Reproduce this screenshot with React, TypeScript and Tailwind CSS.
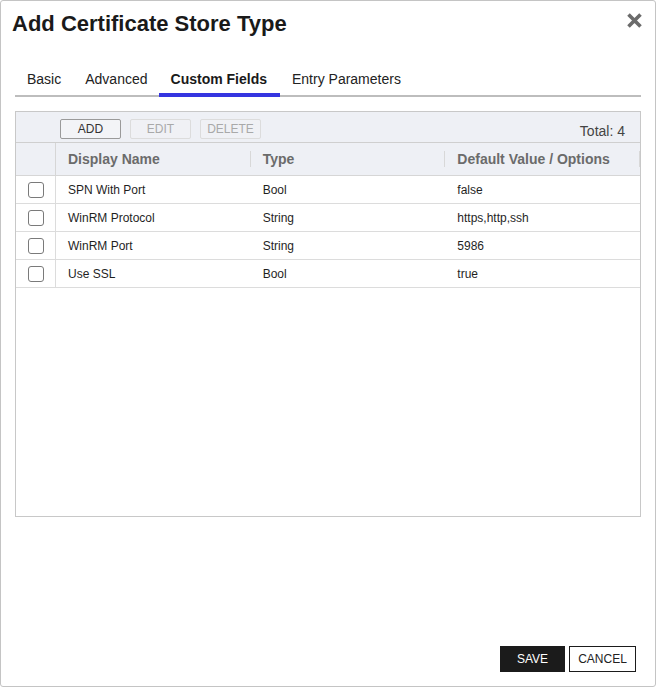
import React from "react";

const rows = [
  { name: "SPN With Port", type: "Bool", def: "false" },
  { name: "WinRM Protocol", type: "String", def: "https,http,ssh" },
  { name: "WinRM Port", type: "String", def: "5986" },
  { name: "Use SSL", type: "Bool", def: "true" },
];

export default function App() {
  const base = "leading-5 text-[14px] pb-[4px] -mb-[2px] border-b-4";
  return (
    <div className="w-[657px] h-[688px] bg-white" style={{ fontFamily: '"Liberation Sans", Arial, sans-serif' }}>
      <div className="w-[656px] h-[687px] border border-[#c4c4c4] rounded-[3px] flex flex-col bg-white">
        {/* Title */}
        <div className="flex items-start justify-between pl-[11px] pr-[12px] mt-[10px]">
          <h1 className="text-[22px] leading-[25px] font-bold text-[#1a1a1a]">Add Certificate Store Type</h1>
          <svg width="17" height="17" viewBox="0 0 17 17" className="mt-[1px]">
            <path d="M2.5 2.5 L14.5 14.5 M14.5 2.5 L2.5 14.5" stroke="#6b6b6b" strokeWidth="3.6" strokeLinecap="butt" />
          </svg>
        </div>

        {/* Tabs */}
        <div className="mx-[14px] mt-[33px] border-b-2 border-[#bdbdbd] flex">
          <div className={`${base} px-3 border-transparent text-[#222]`}>Basic</div>
          <div className={`${base} pl-3 pr-[11px] border-transparent text-[#222]`}>Advanced</div>
          <div className={`${base} pl-3 pr-[13px] border-[#3535e0] font-bold text-[#1a1a1a]`}>Custom Fields</div>
          <div className={`${base} px-3 border-transparent text-[#222]`}>Entry Parameters</div>
        </div>

        {/* Table box */}
        <div className="mx-[14px] mt-[14px] h-[406px] border border-[#c8c8c8] flex flex-col">
          <div className="h-[31px] bg-[#eef0f5] border-b border-[#cfcfcf] flex items-start pt-[7px] pl-[44px] pr-[15px]">
            <div className="flex gap-[9px]">
              <button className="w-[61px] h-[20px] border border-[#9a9a9a] rounded-[2px] bg-[#f3f4f7] text-[12px] leading-[18px] text-[#333] uppercase">
                ADD
              </button>
              <button className="w-[61px] h-[20px] border border-[#dcdcdc] rounded-[2px] bg-[#f0f1f5] text-[12px] leading-[18px] text-[#a9a9a9] uppercase">
                EDIT
              </button>
              <button className="w-[61px] h-[20px] border border-[#dcdcdc] rounded-[2px] bg-[#f0f1f5] text-[12px] leading-[18px] text-[#a9a9a9] uppercase">
                DELETE
              </button>
            </div>
            <div className="ml-auto text-[14px] leading-[20px] mt-[2px] text-[#444]">Total: 4</div>
          </div>

          <div className="grid grid-cols-[40px_1fr_1fr_1fr]">
            {/* header */}
            <div className="h-[33px] bg-[#eef0f5] border-b border-r border-[#d6d6d6]" />
            <div className="h-[33px] bg-[#eef0f5] border-b border-[#d6d6d6] flex items-center pl-[12px] text-[14px] font-bold text-[#6b6b6b]">
              Display Name
            </div>
            <div className="relative h-[33px] bg-[#eef0f5] border-b border-[#d6d6d6] flex items-center pl-[12px] text-[14px] font-bold text-[#6b6b6b]">
              <span className="absolute left-[-1px] top-[8px] h-[16px] w-px bg-[#d8d8d8]" />
              Type
            </div>
            <div className="relative h-[33px] bg-[#eef0f5] border-b border-[#d6d6d6] flex items-center pl-[12px] text-[14px] font-bold text-[#6b6b6b]">
              <span className="absolute left-[-1px] top-[8px] h-[16px] w-px bg-[#d8d8d8]" />
              <span className="absolute right-0 top-[8px] h-[16px] w-px bg-[#d8d8d8]" />
              Default Value / Options
            </div>

            {rows.map((r) => (
              <React.Fragment key={r.name}>
                <div className="h-[28px] border-b border-r border-[#dcdcdc] flex items-center pl-[12px]">
                  <span className="w-[16px] h-[16px] rounded-[3px] border border-[#7a7a7a] bg-white" />
                </div>
                <div className="h-[28px] border-b border-[#dcdcdc] flex items-center pl-[12px] text-[12px] text-[#1f1f1f]">
                  {r.name}
                </div>
                <div className="h-[28px] border-b border-[#dcdcdc] flex items-center pl-[12px] text-[12px] text-[#1f1f1f]">
                  {r.type}
                </div>
                <div className="h-[28px] border-b border-[#dcdcdc] flex items-center pl-[12px] text-[12px] text-[#1f1f1f]">
                  {r.def}
                </div>
              </React.Fragment>
            ))}
          </div>
        </div>

        {/* Footer */}
        <div className="mt-auto mb-[14px] mr-[19px] flex justify-end gap-[4px]">
          <button className="w-[65px] h-[26px] bg-[#1b1b1b] text-white text-[12px] uppercase">SAVE</button>
          <button className="w-[67px] h-[26px] border border-[#1b1b1b] bg-white text-[#222] text-[12px] uppercase">CANCEL</button>
        </div>
      </div>
    </div>
  );
}
